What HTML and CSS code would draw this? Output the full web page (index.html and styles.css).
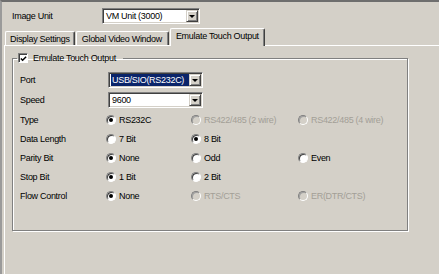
FILE: index.html
```html
<!DOCTYPE html>
<html lang="en">
<head>
    <meta charset="UTF-8">
    <title>Emulate Touch Output</title>
    <link rel="stylesheet" href="styles.css">
</head>
<body>
    <div class="window">
        <div class="unit-row">
            <span class="unit-label">Image Unit</span>
            <div class="combo unit-combo">
                <span class="combo-value">VM Unit (3000)</span>
                <span class="combo-drop"></span>
            </div>
        </div>

        <div class="tabs">
            <div class="tab">Display Settings</div>
            <div class="tab">Global Video Window</div>
            <div class="tab active">Emulate Touch Output</div>
        </div>

        <div class="panel">
            <fieldset class="group">
                <legend>
                    <span class="check">
                        <svg width="8" height="8" viewBox="0 0 8 8"><polyline points="1,3.5 3,5.5 7,1.5" fill="none" stroke="#000" stroke-width="1.7"/></svg>
                    </span>
                    Emulate Touch Output
                </legend>

                <div class="form-grid">
                    <span class="field">Port</span>
                    <div class="combo port-combo span-3">
                        <span class="combo-value"><span class="selected">USB/SIO(RS232C)</span></span>
                        <span class="combo-drop"></span>
                    </div>

                    <span class="field">Speed</span>
                    <div class="combo port-combo span-3">
                        <span class="combo-value">9600</span>
                        <span class="combo-drop"></span>
                    </div>

                    <span class="field">Type</span>
                    <span class="opt"><i class="radio on"></i>RS232C</span>
                    <span class="opt off"><i class="radio"></i>RS422/485 (2 wire)</span>
                    <span class="opt off"><i class="radio"></i>RS422/485 (4 wire)</span>

                    <span class="field">Data Length</span>
                    <span class="opt"><i class="radio"></i>7 Bit</span>
                    <span class="opt"><i class="radio on"></i>8 Bit</span>
                    <span></span>

                    <span class="field">Parity Bit</span>
                    <span class="opt"><i class="radio on"></i>None</span>
                    <span class="opt"><i class="radio"></i>Odd</span>
                    <span class="opt"><i class="radio"></i>Even</span>

                    <span class="field">Stop Bit</span>
                    <span class="opt"><i class="radio on"></i>1 Bit</span>
                    <span class="opt"><i class="radio"></i>2 Bit</span>
                    <span></span>

                    <span class="field">Flow Control</span>
                    <span class="opt"><i class="radio on"></i>None</span>
                    <span class="opt off"><i class="radio"></i>RTS/CTS</span>
                    <span class="opt off"><i class="radio"></i>ER(DTR/CTS)</span>
                </div>
            </fieldset>
        </div>
    </div>
</body>
</html>
```

FILE: styles.css
```css
body {
    margin: 0;
    background-color: #d4d0c8;
    font-family: "Liberation Sans", Arial, sans-serif;
    font-size: 9px;
    letter-spacing: -0.3px;
    color: #000;
}
.window {
    height: 274px;
    box-sizing: border-box;
    border-top: 2px solid #6e6e6e;
    border-left: 2px solid #9a9a9a;
    overflow: hidden;
}
.unit-row {
    display: flex;
    align-items: center;
    height: 27px;
    padding-left: 10px;
}
.unit-label {
    width: 90px;
}
.combo {
    display: flex;
    align-items: center;
    height: 16px;
    box-sizing: border-box;
    background-color: #fff;
    border: 1px solid;
    border-color: #808080 #fff #fff #808080;
    box-shadow: inset 1px 1px #404040, inset -1px -1px #d4d0c8;
    padding: 1px;
}
.unit-combo {
    width: 98px;
}
.combo-value {
    flex: 1;
    padding-left: 2px;
    line-height: 12px;
    white-space: nowrap;
    overflow: hidden;
}
.selected {
    background-color: #0a246a;
    color: #fff;
    display: block;
    margin-left: -1px;
    padding-left: 1px;
}
.combo-drop {
    width: 12px;
    height: 12px;
    box-sizing: border-box;
    background-color: #d4d0c8;
    border: 1px solid;
    border-color: #d4d0c8 #404040 #404040 #d4d0c8;
    box-shadow: inset 1px 1px #fff, inset -1px -1px #808080;
    display: flex;
    align-items: center;
    justify-content: center;
}
.combo-drop::after {
    content: "";
    border-left: 3px solid transparent;
    border-right: 3px solid transparent;
    border-top: 3px solid #000;
    margin-top: 1px;
}
.tabs {
    display: flex;
    align-items: flex-end;
    height: 16px;
    padding-left: 3px;
    position: relative;
    z-index: 1;
}
.tab {
    height: 14px;
    line-height: 14px;
    box-sizing: border-box;
    padding: 0 4px;
    border-left: 1px solid #fff;
    border-top: 1px solid #fff;
    border-right: 1px solid #404040;
    border-radius: 2px 2px 0 0;
    box-shadow: inset -1px 0 #808080;
    white-space: nowrap;
}
.tab + .tab {
    margin-left: 1px;
}
.tab:nth-child(2) {
    padding: 0 6px 0 5px;
}
.tab.active {
    height: 18px;
    line-height: 15px;
    margin-bottom: -1px;
    padding: 0 5px;
    background-color: #d4d0c8;
}
.panel {
    margin-left: 2px;
    height: 240px;
    border-top: 1px solid #fff;
    border-left: 1px solid #fff;
}
.group {
    width: 396px;
    box-sizing: border-box;
    margin: 6px 0 0 7px;
    padding: 0 0 25px 0;
    border: 1px solid #808080;
    box-shadow: inset 1px 1px #fff, 1px 1px #fff;
    min-width: 0;
}
.group legend {
    margin-left: 4px;
    padding: 0 7px 0 1px;
    line-height: 12px;
    display: flex;
    align-items: center;
}
.check {
    width: 10px;
    height: 10px;
    box-sizing: border-box;
    margin-right: 5px;
    background-color: #fff;
    border: 1px solid;
    border-color: #808080 #fff #fff #808080;
    box-shadow: inset 1px 1px #404040;
    display: flex;
    align-items: center;
    justify-content: center;
}
.check svg {
    margin: 1px 0 0 1px;
}
.form-grid {
    display: grid;
    grid-template-columns: 86px 85px 107px 1fr;
    grid-template-rows: 20px 20px repeat(5, 19px);
    align-items: center;
    margin: 6px 0 0 7px;
}
.span-3 {
    grid-column: span 3;
}
.port-combo {
    width: 95px;
    margin-left: 2px;
}
.opt {
    display: flex;
    align-items: center;
    white-space: nowrap;
}
.opt.off {
    color: #a39f97;
}
.radio {
    width: 10px;
    height: 10px;
    box-sizing: border-box;
    margin-right: 3px;
    border-radius: 50%;
    background-color: #fff;
    border: 1px solid;
    border-color: #808080 #fff #fff #808080;
    box-shadow: inset 1px 1px #404040;
    display: flex;
    align-items: center;
    justify-content: center;
}
.opt.off .radio {
    background-color: #d4d0c8;
    box-shadow: inset 1px 1px #a0a0a0;
}
.radio.on::after {
    content: "";
    width: 4px;
    height: 4px;
    border-radius: 50%;
    background-color: #000;
}
```
